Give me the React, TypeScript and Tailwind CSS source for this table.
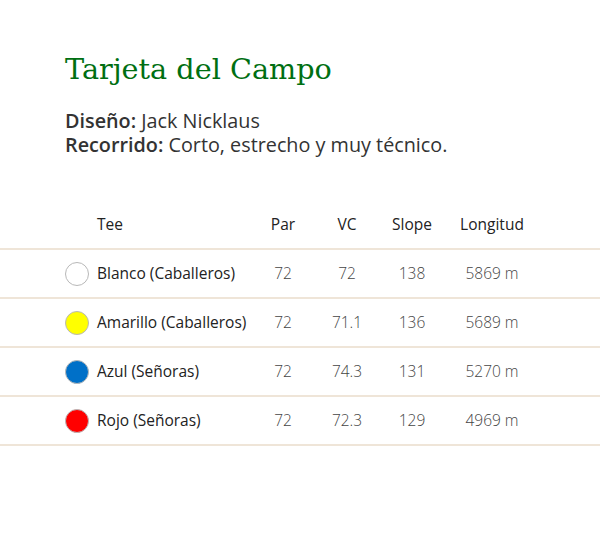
import React from "react";

const rows = [
  { name: "Blanco (Caballeros)", color: "bg-white", par: "72", vc: "72", slope: "138", len: "5869 m" },
  { name: "Amarillo (Caballeros)", color: "bg-[#ffff00]", par: "72", vc: "71.1", slope: "136", len: "5689 m" },
  { name: "Azul (Señoras)", color: "bg-[#0070c8]", par: "72", vc: "74.3", slope: "131", len: "5270 m" },
  { name: "Rojo (Señoras)", color: "bg-[#ff0000]", par: "72", vc: "72.3", slope: "129", len: "4969 m" },
];

export default function App() {
  return (
    <div className="w-[600px] h-[552px] bg-white" style={{ fontFamily: '"Open Sans", sans-serif' }}>
      <div className="pt-[49px] pl-[65px]">
        <h1
          className="text-[28.7px] leading-[40px] text-[#006f12]"
          style={{ fontFamily: '"DejaVu Serif", serif' }}
        >
          Tarjeta del Campo
        </h1>
        <div className="mt-[20px] text-[19.8px] leading-[24px] text-[#333]">
          <p>
            <span className="font-semibold">Diseño:</span> Jack Nicklaus
          </p>
          <p>
            <span className="font-semibold">Recorrido:</span> Corto, estrecho y muy técnico.
          </p>
        </div>
      </div>
      <div className="mt-[44px]">
        <div className="flex items-center h-[49px] border-b-2 border-[#efe5d8] pl-[65px] text-[15.5px] text-[#222] font-medium">
          <div className="w-[32px]" />
          <div className="w-[158px]">Tee</div>
          <div className="w-[56px] text-center">Par</div>
          <div className="w-[72px] text-center">VC</div>
          <div className="w-[58px] text-center">Slope</div>
          <div className="w-[102px] text-center">Longitud</div>
        </div>
        {rows.map((r) => (
          <div
            key={r.name}
            className="flex items-center h-[49px] border-b-2 border-[#efe5d8] pl-[65px] text-[15.5px]"
          >
            <div className="w-[32px]">
              <div className={`w-[24px] h-[24px] rounded-full border border-[#b8b8b8] ${r.color}`} />
            </div>
            <div className="w-[158px] text-[#222]">{r.name}</div>
            <div className="w-[56px] text-center text-[#444] font-light">{r.par}</div>
            <div className="w-[72px] text-center text-[#444] font-light">{r.vc}</div>
            <div className="w-[58px] text-center text-[#444] font-light">{r.slope}</div>
            <div className="w-[102px] text-center text-[#444] font-light">{r.len}</div>
          </div>
        ))}
      </div>
    </div>
  );
}
